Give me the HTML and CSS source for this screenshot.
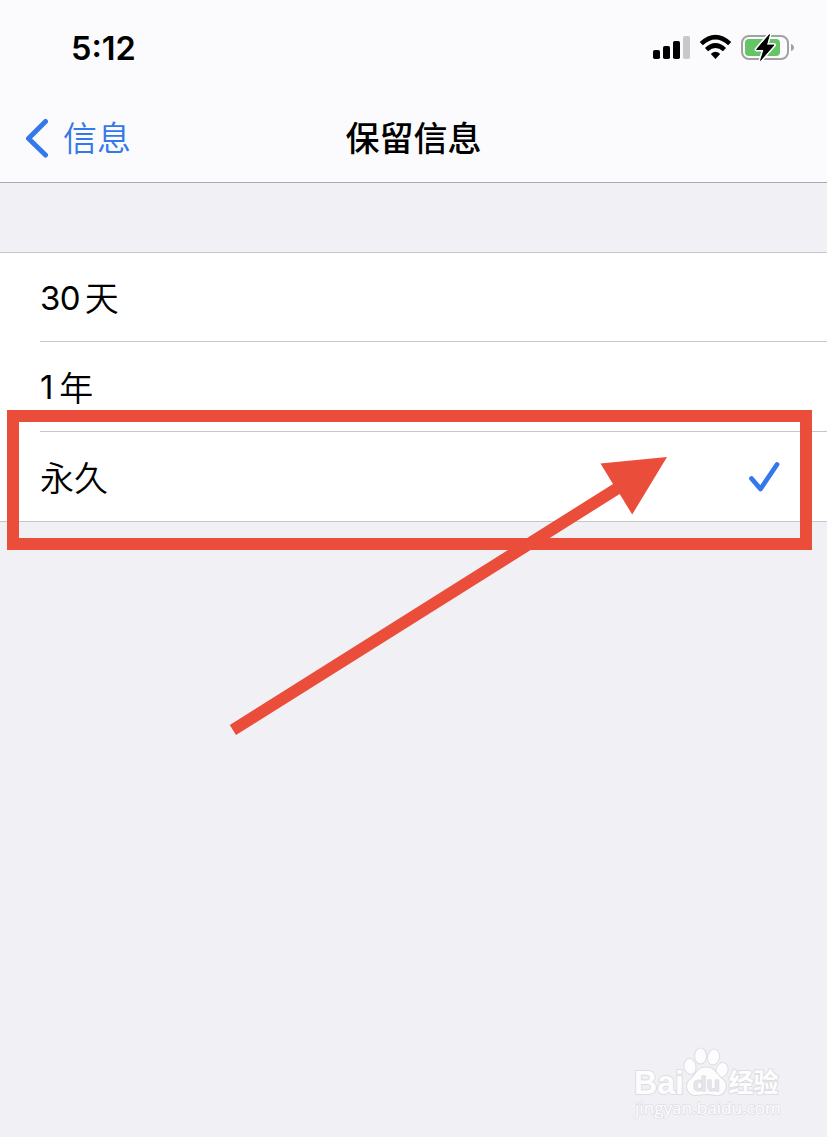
FILE: index.html
```html
<!DOCTYPE html>
<html lang="zh-CN">
<head>
<meta charset="utf-8">
<title>保留信息</title>
<link rel="stylesheet" href="styles.css">
</head>
<body>
<div class="screen">
  <header class="header">
    <div class="status">
      <span class="time">5:12</span>
      <svg class="status-icons" width="144" height="32" viewBox="0 0 144 32">
        <rect x="3" y="18" width="7" height="9" rx="1.8"/>
        <rect x="13" y="14" width="7" height="13" rx="1.8"/>
        <rect x="23" y="9" width="7" height="18" rx="1.8"/>
        <rect x="33" y="4" width="7" height="23" rx="1.8" fill="#c8c8ca"/>
        <g fill="none" stroke="#000" stroke-width="4.6">
          <path d="M51.300 11.600Q65.500-1.500 79.700 11.600"/>
          <path d="M56.500 17.600Q65.500 9.400 74.500 17.600"/>
        </g>
        <path d="M60.800 22Q65.500 17.600 70.200 22L65.500 27Z"/>
        <rect x="92" y="4" width="46" height="23" rx="7" fill="none" stroke="#a2a2a4" stroke-width="2"/>
        <path d="M141 12q3 1 3 3.500t-3 3.500z" fill="#a2a2a4"/>
        <rect x="95" y="7" width="35" height="17" rx="4" fill="#65c466"/>
        <path d="M119.500 2.500L106.500 17.500H114L110.500 28.500L124 13H116.500Z" stroke="#fbfbfd" stroke-width="4" paint-order="stroke" stroke-linejoin="round"/>
        <path d="M119.500 2.500L106.500 17.500H114L110.500 28.500L124 13H116.500Z" stroke="#000" stroke-width=".8" stroke-linejoin="round"/>
      </svg>
    </div>
    <nav class="navbar">
      <div class="back">
        <svg width="24" height="40" viewBox="0 0 24 40"><path d="M21.500 3.500L4.500 20.500L21.500 37" fill="none" stroke="#3478ea" stroke-width="5" stroke-linecap="round" stroke-linejoin="round"/></svg>
        <span class="back-label">信息</span>
      </div>
      <h1 class="title">保留信息</h1>
      <div></div>
    </nav>
  </header>
  <main class="list">
    <div class="row"><span class="num">30</span><span>天</span></div>
    <div class="row"><span class="num one">1</span><span>年</span></div>
    <div class="row"><span>永久</span>
      <svg class="check" width="32" height="32" viewBox="0 0 32 32"><path d="M3.500 17.500L12.500 28L29 3.500" fill="none" stroke="#3478ea" stroke-width="4.800" stroke-linecap="round" stroke-linejoin="round"/></svg>
    </div>
  </main>
  <svg class="annotation" width="827" height="1137" viewBox="0 0 827 1137">
    <rect x="13" y="416" width="793" height="128" fill="none" stroke="#eb4d3b" stroke-width="12"/>
    <path d="M229.800 725L613 484L600.500 463.500L667 457L632.200 514.500L619.700 494L236 735Z" fill="#eb4d3b"/>
  </svg>
  <svg class="watermark" width="160" height="76" viewBox="0 0 160 76">
    <g fill="#fdfdfe" stroke="#dddde2" stroke-width="2" paint-order="stroke" stroke-linejoin="round">
      <text class="logo" x="4" y="44" textLength="50" lengthAdjust="spacingAndGlyphs">Bai</text>
      <ellipse cx="60" cy="16.500" rx="5.500" ry="7.500" transform="rotate(-12 60 16.500)"/>
      <ellipse cx="70.500" cy="6" rx="5.500" ry="7.500"/>
      <ellipse cx="83.500" cy="7" rx="5.500" ry="7.500" transform="rotate(12 83.500 7)"/>
      <ellipse cx="92" cy="20" rx="5.500" ry="7" transform="rotate(18 92 20)"/>
      <path d="M76 17.500C67 17.500 67 24 61 29C54 34 57 45 66 45C70 45 72 44 76.500 44C81 44 82 45 87 45C96 45 99 34 92 29C86 24 85 17.500 76 17.500Z"/>
      <text class="paw-text" x="63" y="41" textLength="27" lengthAdjust="spacingAndGlyphs">du</text>
      <text class="cn" x="98.500" y="42" textLength="50" lengthAdjust="spacingAndGlyphs">经验</text>
      <text class="url" x="5" y="64" textLength="146" lengthAdjust="spacingAndGlyphs">jingyan.baidu.com</text>
    </g>
  </svg>
</div>
</body>
</html>
```
FILE: styles.css
```css
* { box-sizing: border-box; }
body { margin: 0; background: #f1f0f5; }
.screen {
  position: relative;
  width: 827px;
  height: 1137px;
  overflow: hidden;
  background: #f1f0f5;
  color: #000;
  font-family: "Inter", "Noto Sans CJK SC", sans-serif;
}
.header {
  height: 183px;
  background: #fbfbfd;
  border-bottom: 1px solid #aaaaaf;
}
.status {
  display: flex;
  justify-content: space-between;
  align-items: center;
  height: 94px;
  padding: 2px 33px 0 71px;
}
.time { font-size: 32.5px; font-weight: 600; line-height: 40px; letter-spacing: 0; padding-top: 1px; }
.navbar {
  display: grid;
  grid-template-columns: 1fr auto 1fr;
  align-items: center;
  height: 88px;
  padding: 0 24px;
}
.back { display: flex; align-items: center; gap: 15px; color: #3478ea; }
.back-label, .title {
  padding-bottom: 2px;
  font-family: "Noto Sans CJK SC", sans-serif;
  font-size: 34px;
  line-height: 48px;
}
.back-label { font-weight: 350; }
.title { margin: 0; font-weight: 500; }
.list {
  margin-top: 69px;
  height: 270px;
  background: #fff;
  border-top: 1px solid #c6c6c8;
  border-bottom: 1px solid #c6c6c8;
}
.row {
  display: flex;
  align-items: center;
  height: 88px;
  margin-left: 40px;
  padding-right: 47px;
  font-family: "Noto Sans CJK SC", sans-serif;
  font-size: 34px;
  font-weight: 350;
}
.row + .row { height: 90px; border-top: 1px solid #c6c6c8; }
.row span { padding-bottom: 1px; }
.row .num {
  padding: 1px 0 0;
  margin-right: 5px;
  font-family: "Inter", sans-serif;
  font-weight: 400;
  font-size: 33px;
  letter-spacing: -.7px;
}
.row .one { margin-right: 6.500px; }
.check { margin-left: auto; }
.annotation { position: absolute; left: 0; top: 0; }
.watermark { position: absolute; left: 630px; top: 1050px; overflow: visible; }
.logo { font: bold 33px "Liberation Sans", sans-serif; }
.paw-text { font: bold 21px "Liberation Sans", sans-serif; fill: #e4e4e9; stroke: #d6d6dc; stroke-width: 1px; }
.cn { font: bold 26px "Noto Sans CJK SC", sans-serif; }
.url { font: 16.500px "Open Sans", sans-serif; stroke-width: 1.400px; }
```
